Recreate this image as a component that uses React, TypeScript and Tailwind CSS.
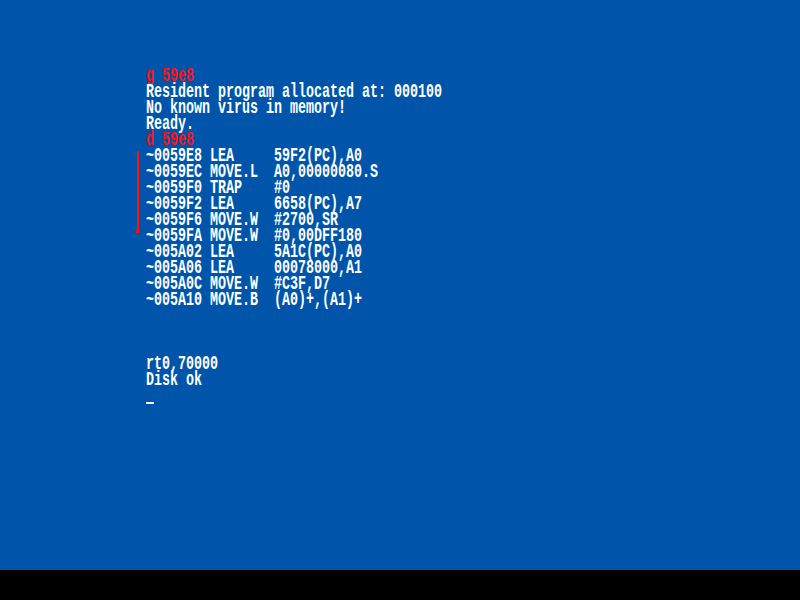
const disasm: [string, string, string][] = [
  ["~0059E8", "LEA", "59F2(PC),A0"],
  ["~0059EC", "MOVE.L", "A0,00000080.S"],
  ["~0059F0", "TRAP", "#0"],
  ["~0059F2", "LEA", "6658(PC),A7"],
  ["~0059F6", "MOVE.W", "#2700,SR"],
  ["~0059FA", "MOVE.W", "#0,00DFF180"],
  ["~005A02", "LEA", "5A1C(PC),A0"],
  ["~005A06", "LEA", "00078000,A1"],
  ["~005A0C", "MOVE.W", "#C3F,D7"],
  ["~005A10", "MOVE.B", "(A0)+,(A1)+"],
];

function Line({ text, red = false }: { text: string; red?: boolean }) {
  return (
    <div className={red ? "h-4 text-[#ff1010]" : "h-4"}>{text || "\u00a0"}</div>
  );
}

export default function App() {
  return (
    <div className="flex h-[600px] w-[800px] flex-col bg-black">
      <div className="h-[570px] bg-[#0055aa] pl-[146px] pt-[68px]">
        <div className="relative">
          {/* breakpoint bracket */}
          <div className="absolute -left-[9px] top-[83px] h-[82px] w-[2px] bg-[#ff1010]" />
          <div className="absolute -left-[10px] top-[162px] h-[3px] w-[3px] bg-[#ff1010]" />
          <div className="origin-left scale-x-[0.6667] whitespace-pre font-['Liberation_Mono',monospace] text-[20px] font-bold leading-4 text-white">
            <Line text="g 59e8" red />
            <Line text="Resident program allocated at: 000100" />
            <Line text="No known virus in memory!" />
            <Line text="Ready." />
            <Line text="d 59e8" red />
            {disasm.map(([addr, op, arg]) => (
              <Line key={addr} text={`${addr} ${op.padEnd(8, " ")}${arg}`} />
            ))}
            <Line text="" />
            <Line text="" />
            <Line text="" />
            <Line text="rt0,70000" />
            <Line text="Disk ok" />
          </div>
          <div className="ml-0 mt-[14px] h-[2px] w-[8px] bg-white" />
        </div>
      </div>
    </div>
  );
}
